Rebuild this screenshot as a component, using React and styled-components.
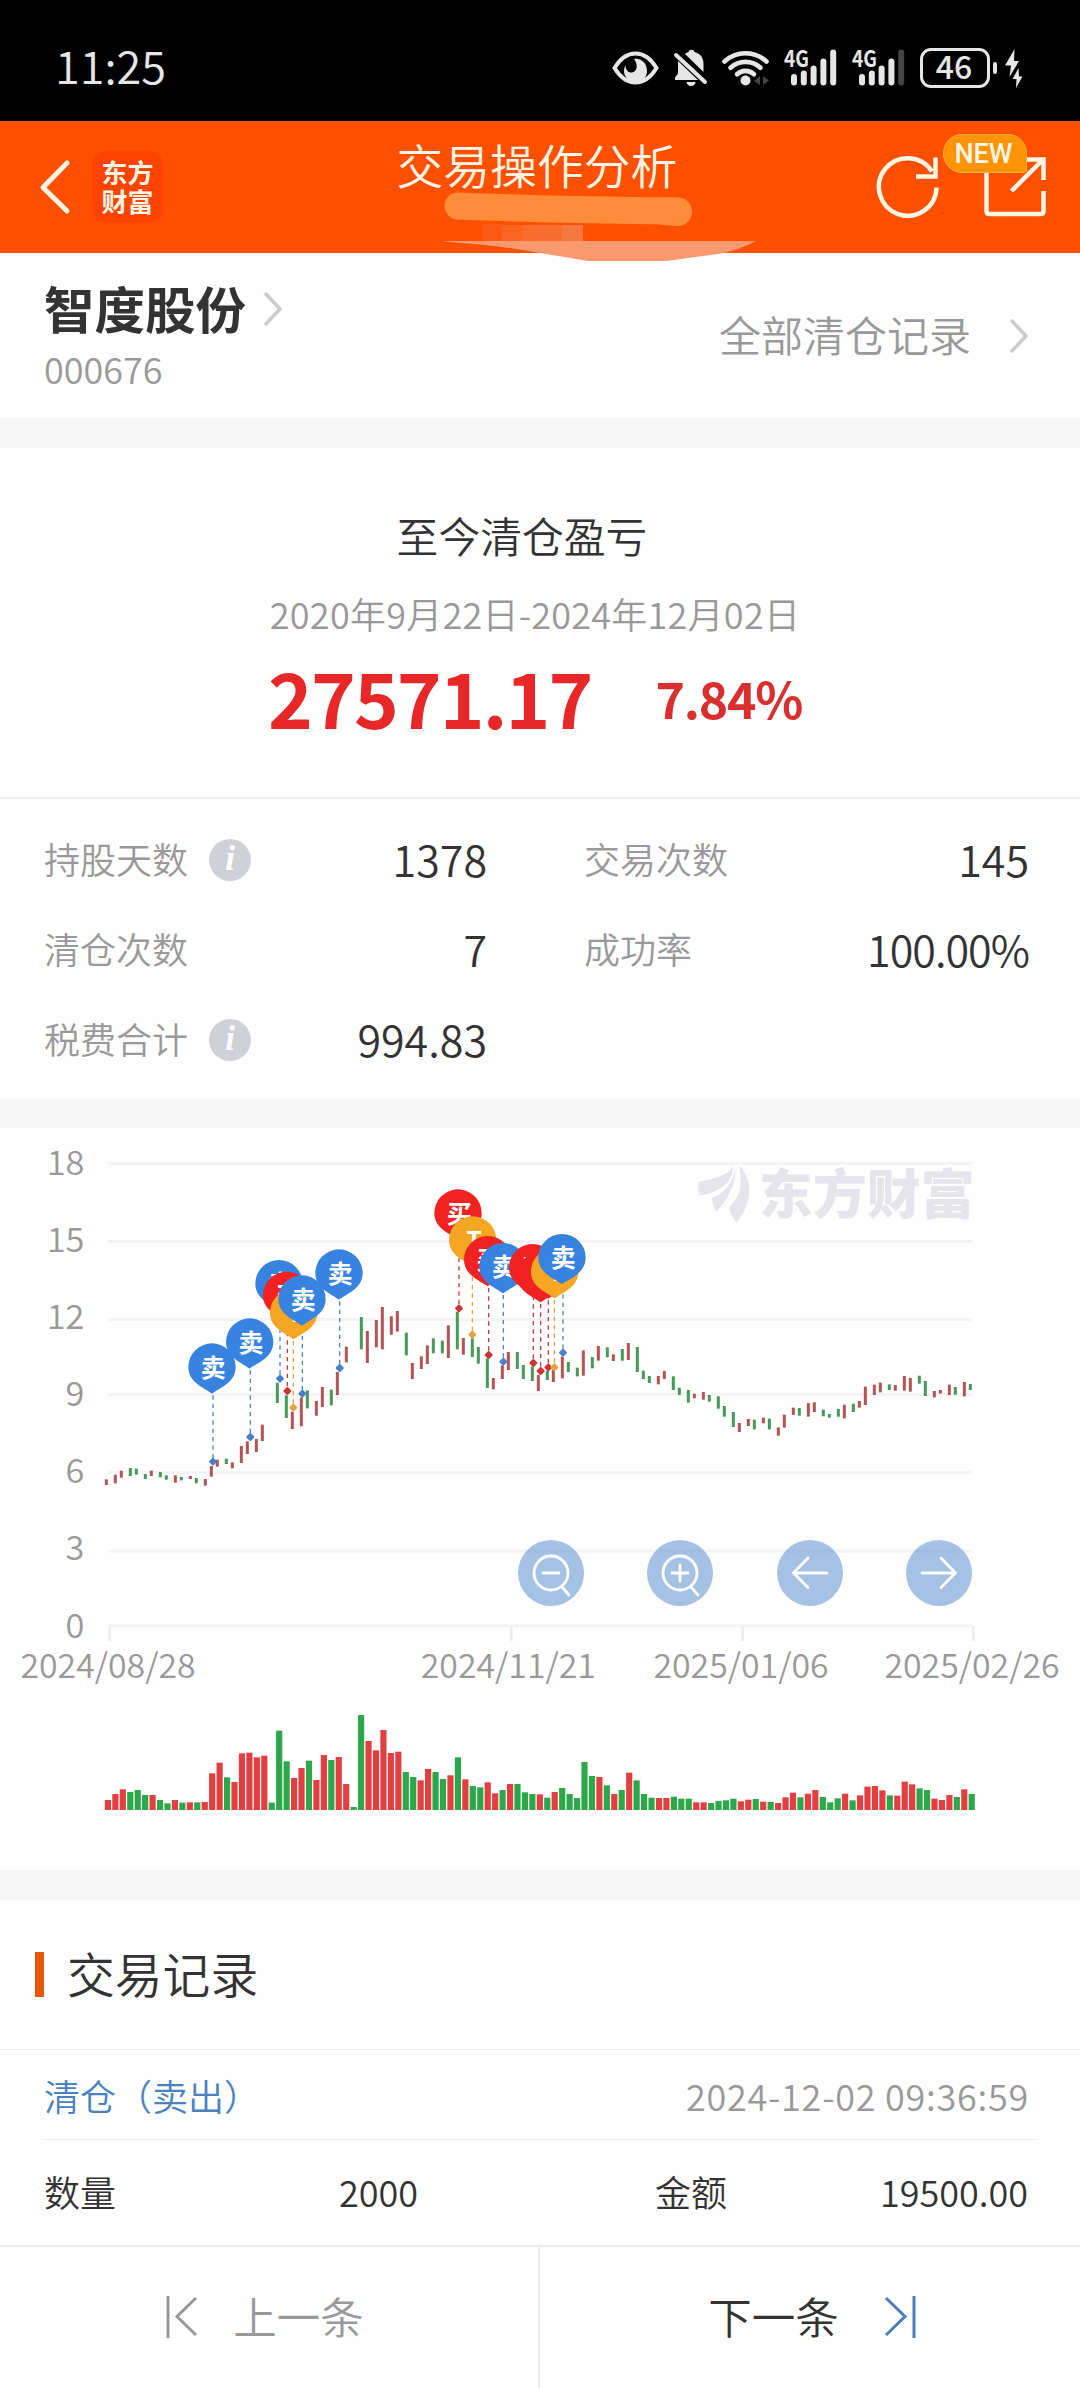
import React from 'react';
import styled, { createGlobalStyle, css } from 'styled-components';

const GlobalStyle = createGlobalStyle`
  * {
    box-sizing: border-box;
  }
  body {
    margin: 0;
    background: #fefefe;
    color: #333;
    font-family: 'Noto Sans CJK SC', 'Noto Sans', sans-serif;
    font-size: 36px;
    font-weight: 350;
  }
  svg {
    display: block;
    flex: none;
    overflow: visible;
  }
`;

const RED = '#e33e40';
const GREEN = '#2ca84a';

const Page = styled.div`
  width: 1080px;
  height: 2388px;
  overflow: hidden;
  display: flex;
  flex-direction: column;
`;

/* ---------- status bar ---------- */

const StatusBar = styled.div`
  height: 121px;
  flex: none;
  background: #000;
  color: #e6e6e6;
  display: flex;
  align-items: center;
  justify-content: space-between;
  padding: 14px 57px 0 55px;
`;

const Time = styled.div`
  font-size: 45px;
  line-height: 50px;
  margin-top: -6px;
`;

const StatusIcons = styled.div`
  display: flex;
  align-items: center;
  gap: 15px;
`;

const Battery = styled.div`
  display: flex;
  align-items: center;
  gap: 3px;
  margin-right: -7px;
`;

const BatteryBody = styled.div`
  width: 70px;
  height: 40px;
  border: 3px solid #e6e6e6;
  border-radius: 11px;
  font-size: 32px;
  font-weight: 500;
  line-height: 29px;
  text-align: center;
  padding-right: 2px;
`;

const BatteryNub = styled.div`
  width: 4px;
  height: 12px;
  border-radius: 2px;
  background: #e6e6e6;
`;

const EyeIcon = () => (
  <svg width="47" height="34" viewBox="0 0 47 34">
    <path
      d="M2.500 17C8 8 15 2.500 23.500 2.500S39 8 44.500 17C39 26 32 31.500 23.500 31.500S8 26 2.500 17Z"
      fill="none"
      stroke="#e6e6e6"
      strokeWidth="4"
    />
    <path
      d="M22 8c7-1 13 4 13 12 0 6-4 11-11 11s-12-5-12-11c0-2 .5-4 1.500-6 0 5 3 8 6.500 7.500 5-.5 6.500-8 2-13.500Z"
      fill="#e6e6e6"
    />
  </svg>
);

const BellOffIcon = () => (
  <svg width="33" height="37" viewBox="0 0 33 37" fill="#e6e6e6">
    <path d="M11 5c1-1 2-1.500 3.500-2 .5-3 5.500-3 6 0 6 1.500 9 6 9 12v8L11 5Z" />
    <path d="M4 12 24 31H1v-2.500l3-4V12Z" />
    <path d="M12.500 33h9a4.500 4 0 0 1-9 0Z" />
    <path d="m2 6 29 27" stroke="#e6e6e6" strokeWidth="4" strokeLinecap="round" />
  </svg>
);

const WifiIcon = () => (
  <svg width="47" height="37" viewBox="0 0 47 37" fill="none">
    <g stroke="#e6e6e6" strokeWidth="4.600" strokeLinecap="round">
      <path d="M2.500 12.500a31 31 0 0 1 42 0" />
      <path d="M8.500 18.800a22 22 0 0 1 30 0" />
      <path d="M15 25.200a12.500 12.500 0 0 1 17 0" />
    </g>
    <circle cx="23.500" cy="31.500" r="5" fill="#e6e6e6" />
    <path d="M32 32l6-5v9l-6-4ZM41 27v9l6-4.500-6-4.500Z" fill="#444" />
  </svg>
);

const SIGNAL_TOPS = [25, 21.5, 16.5, 9.5, 0.5];

const SignalIcon = ({ level }) => (
  <svg width="53" height="37" viewBox="0 0 53 37">
    <text
      x="0"
      y="18"
      fontSize="23"
      fontWeight="700"
      fill="#e6e6e6"
      textLength="25"
      lengthAdjust="spacingAndGlyphs"
    >
      4G
    </text>
    {SIGNAL_TOPS.map((top, i) => (
      <rect
        key={top}
        x={7 + i * 9.8}
        y={top}
        width="6"
        height={36.5 - top}
        rx="3"
        fill={i < level ? '#e6e6e6' : '#444'}
      />
    ))}
  </svg>
);

const BoltIcon = () => (
  <svg width="18" height="40" viewBox="0 0 18 40" fill="#e6e6e6">
    <path d="M9.500 1 0 17.500h6L4.500 29 14 13H9L9.500 1Z" />
    <path d="M13.500 20 7.500 31h4L11 40l6.500-11.500H14L13.500 20Z" />
  </svg>
);

/* ---------- header ---------- */

const Header = styled.header`
  position: relative;
  height: 132px;
  flex: none;
  background: #ff5000;
  color: #fff6e6;
  display: grid;
  grid-template-columns: 1fr 284px 1fr;
  padding: 0 33px 0 38px;
`;

const HeaderLeft = styled.div`
  display: flex;
  align-items: center;
  gap: 21px;
`;

const Logo = styled.div`
  width: 71px;
  height: 72px;
  border-radius: 14px;
  background: #ff4300;
  font-size: 26px;
  font-weight: 700;
  line-height: 29px;
  text-align: center;
  padding-top: 6px;
`;

const HeaderTitle = styled.h1`
  margin: 15px 12px 0 0;
  font-size: 46.800px;
  font-weight: inherit;
  line-height: 56px;
  white-space: nowrap;
  text-indent: -4px;
`;

const HeaderRight = styled.div`
  display: flex;
  align-items: center;
  justify-content: flex-end;
  gap: 42px;
`;

const ShareWrap = styled.div`
  position: relative;
`;

const NewBadge = styled.span`
  position: absolute;
  right: 20px;
  top: -20px;
  width: 84px;
  height: 39px;
  border: 1px solid #ffab3d;
  border-radius: 19px 19px 3px 19px;
  background: #ff9406;
  font-family: Roboto, sans-serif;
  font-size: 27px;
  font-weight: 500;
  line-height: 38px;
  text-align: center;
  padding-right: 3px;
`;

const Scribble = styled.svg`
  position: absolute;
  left: 440px;
  top: 68px;
  z-index: 1;
`;

/* ---------- stock row ---------- */

const StockRow = styled.section`
  height: 165px;
  flex: none;
  display: flex;
  justify-content: space-between;
  padding: 24px 52px 0 44px;
`;

const StockName = styled.div`
  display: flex;
  align-items: center;
  gap: 18px;
  font-size: 50.500px;
  font-weight: 700;
  line-height: 60px;
`;

const StockCode = styled.div`
  margin-top: 9px;
  color: #999;
  line-height: 44px;
`;

const AllRecords = styled.div`
  display: flex;
  align-items: center;
  gap: 39px;
  height: 113px;
  color: #999;
  font-size: 42px;
`;

const ArrowIcon = styled.svg.attrs({ width: 18, height: 36, viewBox: '0 0 18 36' })`
  fill: none;
  stroke: #ccc;
  stroke-width: 3.500;
  margin-top: 4px;
`;

const Gap = styled.div`
  height: ${props => props.size || 30}px;
  flex: none;
  background: #f7f7f7;
`;

/* ---------- profit ---------- */

const Profit = styled.section`
  height: 351px;
  flex: none;
  border-bottom: 2px solid #f0f0f0;
  padding-top: 62px;
  text-align: center;
`;

const ProfitTitle = styled.div`
  font-size: 41.800px;
  line-height: 50px;
  padding-right: 36px;
`;

const ProfitDate = styled.div`
  margin-top: 31px;
  padding-right: 10px;
  color: #999;
  line-height: 44px;
  letter-spacing: 0.250px;
`;

const ProfitValues = styled.div`
  width: 534px;
  margin: 19px 0 0 268px;
  display: flex;
  align-items: center;
  justify-content: space-between;
  font-weight: 700;
`;

const Amount = styled.span`
  color: #e82828;
  font-size: 76px;
  line-height: 80px;
  letter-spacing: -1.900px;
`;

const Percent = styled.span`
  color: #d9302f;
  font-size: 50px;
  line-height: 80px;
  letter-spacing: -1.300px;
  margin-top: 3px;
`;

/* ---------- stats ---------- */

const Stats = styled.section`
  height: 300px;
  flex: none;
  display: grid;
  grid-template-columns: 443px 445px;
  grid-auto-rows: 90px;
  column-gap: 97px;
  padding: 14px 51px 0 44px;
`;

const Stat = styled.div`
  display: flex;
  align-items: center;
`;

const StatLabel = styled.span`
  color: #999;
`;

const StatValue = styled.span`
  margin-left: auto;
  font-size: 43px;
  letter-spacing: ${props => (props.$tight ? '-1px' : 'normal')};
`;

const Info = styled.i`
  width: 42px;
  height: 42px;
  margin: 4px 0 0 21px;
  border-radius: 50%;
  background: #ced1d6;
  color: #fff;
  font: italic 700 35px/40px 'Liberation Serif', serif;
  text-align: center;
`;

/* ---------- chart ---------- */

const ChartSection = styled.section`
  position: relative;
  height: 742px;
  flex: none;
`;

const ChartButtons = styled.div`
  position: absolute;
  left: 518px;
  top: 412px;
  display: flex;
  gap: 63.300px;
`;

const ChartButton = styled.div`
  width: 66px;
  height: 66px;
  border-radius: 50%;
  background: rgba(75, 134, 204, 0.5);

  svg {
    fill: none;
    stroke: #fff;
    stroke-width: 2.800;
    stroke-linecap: round;
    stroke-linejoin: round;
  }
`;

/* ---------- records ---------- */

const RecordsTitle = styled.h2`
  height: 150px;
  flex: none;
  margin: 0;
  display: flex;
  align-items: center;
  border-bottom: 1px solid #ececec;
  padding: 0 35px 4px;
  font-size: 47.800px;
  font-weight: inherit;

  &::before {
    content: '';
    width: 9px;
    height: 45px;
    margin: 4px 23px 0 0;
    background: #e55a0a;
  }
`;

const RecordHead = styled.div`
  height: 90px;
  flex: none;
  display: flex;
  align-items: center;
  justify-content: space-between;
  margin: 0 43px;
  border-bottom: 1px solid #ececec;
  padding: 0 8px 0 1px;
  color: #4a82c0;

  time {
    color: #999;
    letter-spacing: 0.750px;
  }
`;

const RecordRow = styled.div`
  height: 105px;
  flex: none;
  display: grid;
  grid-template-columns: 374px 373px;
  column-gap: 237px;
  align-items: center;
  padding: 0 51px 3px 44px;
`;

const RecordCell = styled.div`
  display: flex;
  justify-content: space-between;
`;

const Footer = styled.footer`
  flex: 1;
  display: flex;
  border-top: 2px solid #ececec;
`;

const FooterButton = styled.div`
  width: 541px;
  display: flex;
  align-items: center;
  justify-content: center;
  padding-bottom: 5px;
  font-size: 43.500px;

  svg {
    fill: none;
    stroke: currentColor;
    stroke-width: 3;
    margin-top: 4px;
  }

  ${props =>
    props.$prev
      ? css`
          gap: 35px;
          color: #999;
          padding-right: 8px;
          border-right: 2px solid #ececec;
        `
      : css`
          gap: 45px;
          padding-left: 4px;
          svg {
            color: #4a7fb8;
          }
        `}
`;

/* Everything below is in @3x units: [x, top, bottom, up?] */
const CANDLES = [
  [319, 1048, 1065, 1], [346, 1034, 1060, 1], [364, 1022, 1043, 1], [391, 1014, 1038, 0],
  [409, 1016, 1034, 0], [436, 1032, 1047, 0], [454, 1022, 1038, 1], [481, 1026, 1042, 0],
  [499, 1036, 1049, 0], [526, 1036, 1058, 1], [544, 1041, 1051, 0], [571, 1038, 1047, 1],
  [589, 1044, 1060, 0], [616, 1047, 1067, 1], [634, 1008, 1040, 1], [652, 989, 1010, 1],
  [679, 986, 1002, 0], [697, 997, 1015, 1], [724, 948, 999, 1], [742, 934, 972, 1],
  [769, 927, 966, 1], [787, 884, 933, 1], [832, 758, 819, 0], [859, 796, 864, 0],
  [877, 845, 897, 1], [904, 802, 889, 1], [922, 781, 835, 0], [949, 813, 857, 1],
  [967, 771, 831, 1], [994, 779, 826, 0], [1012, 726, 795, 1], [1039, 650, 697, 1],
  [1084, 561, 658, 0], [1102, 603, 699, 1], [1129, 570, 652, 1], [1147, 531, 658, 1],
  [1174, 559, 614, 1], [1192, 543, 605, 1], [1219, 608, 676, 0], [1237, 699, 747, 1],
  [1264, 679, 717, 1], [1282, 646, 702, 1], [1300, 625, 670, 0], [1327, 632, 670, 0],
  [1345, 586, 684, 1], [1372, 545, 658, 0], [1390, 624, 674, 1], [1417, 625, 681, 0],
  [1435, 651, 701, 0], [1462, 685, 774, 0], [1480, 744, 778, 1], [1507, 706, 747, 1],
  [1525, 666, 720, 1], [1552, 666, 717, 0], [1570, 705, 747, 0], [1597, 710, 753, 0],
  [1615, 735, 783, 1], [1642, 723, 750, 0], [1660, 720, 756, 1], [1687, 680, 745, 1],
  [1705, 696, 726, 0], [1732, 713, 739, 0], [1750, 661, 737, 1], [1777, 681, 715, 0],
  [1795, 648, 692, 1], [1822, 652, 682, 0], [1840, 673, 693, 1], [1867, 657, 692, 0],
  [1885, 639, 690, 1], [1912, 651, 726, 0], [1930, 722, 747, 0], [1948, 738, 759, 0],
  [1975, 738, 763, 1], [1993, 723, 747, 1], [2020, 739, 780, 0], [2038, 773, 795, 0],
  [2065, 780, 818, 0], [2083, 791, 805, 1], [2110, 786, 809, 1], [2128, 795, 815, 0],
  [2155, 799, 836, 0], [2173, 828, 860, 0], [2200, 846, 891, 0], [2218, 879, 906, 1],
  [2245, 867, 888, 1], [2263, 869, 898, 0], [2290, 863, 880, 1], [2308, 866, 898, 0],
  [2335, 892, 917, 1], [2353, 854, 893, 1], [2380, 833, 855, 1], [2398, 834, 857, 0],
  [2425, 819, 860, 1], [2443, 817, 846, 1], [2470, 839, 859, 0], [2488, 852, 863, 0],
  [2515, 837, 860, 0], [2533, 824, 865, 1], [2560, 821, 846, 0], [2578, 813, 833, 1],
  [2596, 770, 825, 1], [2623, 764, 795, 1], [2641, 758, 787, 1], [2668, 763, 780, 0],
  [2686, 765, 782, 1], [2713, 738, 782, 1], [2731, 744, 785, 1], [2758, 737, 761, 0],
  [2776, 753, 798, 0], [2803, 783, 802, 1], [2821, 780, 791, 1], [2848, 764, 795, 1],
  [2866, 771, 794, 0], [2893, 756, 799, 1], [2911, 762, 780, 0],
];

// bar heights, negative = down day
const VOLUMES = [
  30, 48, 62, -54, -60, -45, 45, -30, -20, 30, -22, 23, -23, 24, 110, 142, -98, 84, 170, 172,
  158, 163, -22, -238, -146, 96, 126, -148, 90, 165, -150, 159, 78, -9, -285, 207, 179, 240,
  171, 175, -114, -99, 89, 123, -114, -93, 104, -158, 92, -72, -68, 83, 50, -60, 78, -78, -53,
  -48, 47, -37, 54, -66, -48, -36, -144, -102, 99, -74, 48, -60, 112, -89, -48, -37, 36, 36,
  -40, -34, -34, 23, 23, -21, -27, -29, -34, 26, 31, -33, 25, -24, 21, 38, 52, -38, 49, 60, -39,
  -23, -35, 49, -29, 44, 70, 72, 59, -44, 43, 85, 77, -65, -60, 34, 30, 45, -39, 62, -48,
];

const PIN_TYPES = {
  buy: { label: '买', fill: '#f02222', line: '#cc3433' },
  sell: { label: '卖', fill: '#3883e0', line: '#4580cc' },
  both: { label: 'T', fill: '#f5a623', line: '#e3a33a' },
};

// x / y is the centre of the pin, lx / dot is where its line lands
const PINS = [
  { type: 'sell', x: 636, y: 711, lx: 639, dot: 995 },
  { type: 'sell', x: 749, y: 636, lx: 751, dot: 921 },
  { type: 'sell', x: 837, y: 461, lx: 840, dot: 746 },
  { type: 'buy', x: 860, y: 496, lx: 862, dot: 783 },
  { type: 'both', x: 881, y: 548, lx: 880, dot: 833 },
  { type: 'sell', x: 906, y: 507, lx: 907, dot: 791 },
  { type: 'sell', x: 1017, y: 429, lx: 1019, dot: 714 },
  { type: 'buy', x: 1374, y: 249, lx: 1377, dot: 535 },
  { type: 'both', x: 1418, y: 330, lx: 1417, dot: 614 },
  { type: 'buy', x: 1463, y: 389, lx: 1466, dot: 675 },
  { type: 'sell', x: 1509, y: 410, lx: 1510, dot: 695 },
  { type: 'buy', x: 1598, y: 413, lx: 1600, dot: 699 },
  { type: 'buy', x: 1622, y: 437, lx: 1622, dot: 723 },
  { type: 'buy', x: 1645, y: 426, lx: 1645, dot: 712 },
  { type: 'both', x: 1664, y: 425, lx: 1663, dot: 712 },
  { type: 'sell', x: 1686, y: 383, lx: 1689, dot: 668 },
];

const GRID = [
  { value: 18, line: 100, label: 97 },
  { value: 15, line: 334, label: 329 },
  { value: 12, line: 568, label: 560 },
  { value: 9, line: 793, label: 791 },
  { value: 6, line: 1027, label: 1021 },
  { value: 3, line: 1263, label: 1254 },
  { value: 0, line: 1487, label: 1487 },
];

const DATES = [
  { text: '2024/08/28', x: 324, tick: 329 },
  { text: '2024/11/21', x: 1525, tick: 1534 },
  { text: '2025/01/06', x: 2223, tick: 2228 },
  { text: '2025/02/26', x: 2916, tick: 2920 },
];

const Watermark = () => (
  <g fill="#e5e5eb">
    <path d="M2095 155c45-8 90-18 104-47 3 40-27 76-101 89q-5-22-3-42Z" />
    <path d="M2206 110c4 55-25 100-57 135-8-12-12-26-13-42 38-14 64-45 70-93Z" />
    <path d="M2218 108c40 40 42 108-8 170-10-13-22-32-22-47 37-32 38-75 30-123Z" />
    <text
      x="2276"
      y="253"
      fontSize="160"
      fontWeight="900"
      textLength="648"
      lengthAdjust="spacingAndGlyphs"
    >
      东方财富
    </text>
  </g>
);

const Pin = ({ type, x, y }) => (
  <g>
    <path
      d={`M${x} ${y + 80}C${x - 20} ${y + 64} ${x - 71} ${y + 48} ${x - 71} ${y}a71 71 0 0 1 142 0C${x + 71} ${y + 48} ${x + 20} ${y + 64} ${x} ${y + 80}Z`}
      fill={PIN_TYPES[type].fill}
    />
    <text x={x + 4} y={y + 29} fontSize="75" fontWeight="700" fill="#fff" textAnchor="middle">
      {PIN_TYPES[type].label}
    </text>
  </g>
);

const Chart = () => (
  <svg width="1080" height="742" viewBox="0 -6 3240 2226">
    {GRID.map(({ value, line, label }) => (
      <g key={value}>
        <rect x="324" y={line - 4} width="2592" height="9" fill="#f4f4f6" />
        <text x="253" y={label + 37} fontSize="103" fill="#999" textAnchor="end">
          {value}
        </text>
      </g>
    ))}
    {DATES.map(({ text, x, tick }) => (
      <g key={text}>
        <rect x={tick - 4} y="1488" width="8" height="45" fill="#ececee" />
        <text x={x} y="1644" fontSize="101.500" fill="#999" textAnchor="middle">
          {text}
        </text>
      </g>
    ))}
    <Watermark />
    {CANDLES.map(([x, top, bottom, up]) => (
      <rect
        key={x}
        x={x - 4.5}
        y={top}
        width="9"
        height={bottom - top}
        fill={up ? '#b55355' : '#459a5a'}
      />
    ))}
    {PINS.map(({ type, x, y, lx, dot }) => (
      <g key={x} stroke={PIN_TYPES[type].line} fill={PIN_TYPES[type].line}>
        <path d={`M${lx} ${y + 60}V${dot}`} strokeWidth="3.800" strokeDasharray="13 12" />
        <path d={`M${lx - 9} ${dot}l9-9 9 9-9 9Z`} strokeWidth="6" strokeLinejoin="round" />
      </g>
    ))}
    {PINS.map(pin => (
      <Pin key={pin.x} {...pin} />
    ))}
    {VOLUMES.map((v, i) => (
      <rect
        key={i}
        x={314.500 + i * 22.34}
        y={2040 - Math.abs(v)}
        width="18.500"
        height={Math.abs(v)}
        fill={v > 0 ? RED : GREEN}
      />
    ))}
  </svg>
);

const App = () => (
  <Page>
    <GlobalStyle />
    <StatusBar>
      <Time>11:25</Time>
      <StatusIcons>
        <EyeIcon />
        <BellOffIcon />
        <WifiIcon />
        <SignalIcon level={5} />
        <SignalIcon level={4} />
        <Battery>
          <BatteryBody>46</BatteryBody>
          <BatteryNub />
        </Battery>
        <BoltIcon />
      </StatusIcons>
    </StatusBar>

    <Header>
      <HeaderLeft>
        <svg width="33" height="56" viewBox="0 0 33 56">
          <path
            d="M29 4 5 28.500 29 52"
            fill="none"
            stroke="#fff6e6"
            strokeWidth="5"
            strokeLinecap="round"
            strokeLinejoin="round"
          />
        </svg>
        <Logo>
          东方
          <br />
          财富
        </Logo>
      </HeaderLeft>
      <HeaderTitle>交易操作分析</HeaderTitle>
      <HeaderRight>
        <svg width="66" height="66" viewBox="0 0 66 66" fill="none" stroke="#fff6e6" strokeWidth="4.500">
          <path d="M61.500 33.500A28.800 28.800 0 1 1 57 17.500" />
          <path d="M41 22.500h19.500V3.500" />
        </svg>
        <ShareWrap>
          <svg width="64" height="66" viewBox="0 0 64 66" fill="none" stroke="#fff6e6" strokeWidth="4.500">
            <path d="M30 6H3.500v51q0 3 3 3h51q3 0 3-3V37" />
            <path d="M28.500 37 59 6.500M42 5.500h18.500V26" />
          </svg>
          <NewBadge>NEW</NewBadge>
        </ShareWrap>
      </HeaderRight>
      <Scribble width="320" height="76" viewBox="440 189 320 76">
        <path d="M458 206Q560 210 678 211" fill="none" stroke="#ff8c3a" strokeWidth="27" strokeLinecap="round" />
        <path d="M664 211l14 1" fill="none" stroke="#ff8c3a" strokeWidth="28" strokeLinecap="round" />
        <path d="M482 224h20v17h-20Z" fill="#fb5a14" />
        <path d="M502 225h20v16h-20Z" fill="#fa6420" />
        <path d="M522 225h20v16h-20Z" fill="#f86c2e" />
        <path d="M542 225h20v16h-20Z" fill="#f76d2f" />
        <path d="M562 225h21v16h-21Z" fill="#f57840" />
        <path d="M441 241h315q-16 9-38 13-24 3-51 7h-79q-24-4-48-8-40-7-65-9-18-1-34-3Z" fill="#fa9a6e" />
      </Scribble>
    </Header>

    <StockRow>
      <div>
        <StockName>
          智度股份
          <ArrowIcon>
            <path d="M1 2 16 18 1 34" />
          </ArrowIcon>
        </StockName>
        <StockCode>000676</StockCode>
      </div>
      <AllRecords>
        全部清仓记录
        <ArrowIcon>
          <path d="M1 2 16 18 1 34" />
        </ArrowIcon>
      </AllRecords>
    </StockRow>

    <Gap />

    <Profit>
      <ProfitTitle>至今清仓盈亏</ProfitTitle>
      <ProfitDate>2020年9月22日-2024年12月02日</ProfitDate>
      <ProfitValues>
        <Amount>27571.17</Amount>
        <Percent>7.84%</Percent>
      </ProfitValues>
    </Profit>

    <Stats>
      <Stat>
        <StatLabel>持股天数</StatLabel>
        <Info>i</Info>
        <StatValue>1378</StatValue>
      </Stat>
      <Stat>
        <StatLabel>交易次数</StatLabel>
        <StatValue>145</StatValue>
      </Stat>
      <Stat>
        <StatLabel>清仓次数</StatLabel>
        <StatValue>7</StatValue>
      </Stat>
      <Stat>
        <StatLabel>成功率</StatLabel>
        <StatValue $tight>100.00%</StatValue>
      </Stat>
      <Stat>
        <StatLabel>税费合计</StatLabel>
        <Info>i</Info>
        <StatValue>994.83</StatValue>
      </Stat>
    </Stats>

    <Gap size={29} />

    <ChartSection>
      <Chart />
      <ChartButtons>
        <ChartButton>
          <svg width="66" height="66" viewBox="0 0 66 66">
            <circle cx="33" cy="33" r="17" />
            <path d="M25 33h16M44 47l7 8" />
          </svg>
        </ChartButton>
        <ChartButton>
          <svg width="66" height="66" viewBox="0 0 66 66">
            <circle cx="33" cy="33" r="17" />
            <path d="M25 33h16M33 25v16M44 47l7 8" />
          </svg>
        </ChartButton>
        <ChartButton>
          <svg width="66" height="66" viewBox="0 0 66 66">
            <path d="M50 33H16.500M31 18 16.500 33 31 47.500" />
          </svg>
        </ChartButton>
        <ChartButton>
          <svg width="66" height="66" viewBox="0 0 66 66">
            <path d="M16 33h33.500M35 18l14.500 15L35 47.500" />
          </svg>
        </ChartButton>
      </ChartButtons>
    </ChartSection>

    <Gap />

    <RecordsTitle>交易记录</RecordsTitle>
    <RecordHead>
      清仓（卖出）
      <time>2024-12-02 09:36:59</time>
    </RecordHead>
    <RecordRow>
      <RecordCell>
        <span>数量</span>
        <span>2000</span>
      </RecordCell>
      <RecordCell>
        <span>金额</span>
        <span>19500.00</span>
      </RecordCell>
    </RecordRow>

    <Footer>
      <FooterButton $prev>
        <svg width="32" height="42" viewBox="0 0 32 42">
          <path d="M2 0v42M30 2 11 20.500 30 39" />
        </svg>
        上一条
      </FooterButton>
      <FooterButton>
        下一条
        <svg width="32" height="42" viewBox="0 0 32 42">
          <path d="M30 0v42M2 2l19 18.500L2 39" />
        </svg>
      </FooterButton>
    </Footer>
  </Page>
);

export default App;
